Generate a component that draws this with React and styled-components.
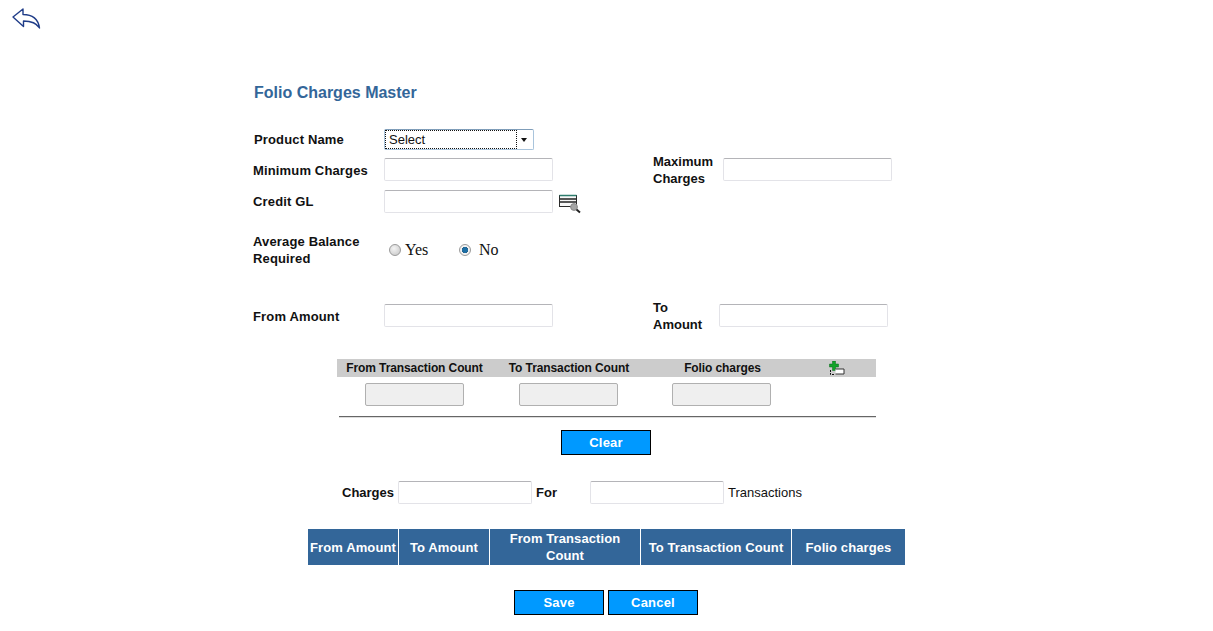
import styled, { createGlobalStyle } from 'styled-components'

const columns = [
  { title: 'From Amount', width: 90 },
  { title: 'To Amount', width: 90 },
  { title: 'From Transaction Count', width: 150 },
  { title: 'To Transaction Count', width: 150 },
  { title: 'Folio charges', width: 113 },
]

function BackIcon() {
  return (
    <svg width="30" height="24" viewBox="0 0 30 24" fill="none">
      <path
        d="M1 9L11 1V6.5C19 6.5 26 10 27.5 20C24.5 15 19 13 11.5 13V18.5L1 9Z"
        stroke="#1f3c88"
        strokeWidth="1.4"
        strokeLinejoin="round"
      />
    </svg>
  )
}

function LookupIcon() {
  return (
    <svg width="23" height="20" viewBox="0 0 23 20">
      <rect x="0.5" y="1.5" width="17" height="11" fill="#f8f8f8" stroke="#2b2b2b" />
      <path d="M0.5 1.5H17.5" stroke="#2e7d6e" strokeWidth="1.5" />
      <path d="M1 5H17M1 8H17" stroke="#222" strokeWidth="1.3" />
      <circle cx="15" cy="13" r="3.4" fill="#a6a6a6" stroke="#8a8a8a" />
      <path d="M17.5 15.5L21 18.5" stroke="#222" strokeWidth="2" />
    </svg>
  )
}

function AddRowIcon() {
  return (
    <svg width="16" height="14" viewBox="0 0 16 14">
      <path d="M3.5 0H6.5V3H9.5V6H6.5V9.5H3.5V6H0.5V3H3.5Z" fill="#12a32a" stroke="#0b6b1c" strokeWidth="0.5" />
      <path d="M6.5 8H15V13H6.5" fill="#fff" stroke="#333" strokeWidth="1" />
      <path d="M1.5 9V13.5H5" stroke="#111" strokeWidth="1" fill="none" strokeDasharray="2 1" />
    </svg>
  )
}

export default function App() {
  return (
    <Page>
      <GlobalStyle />
      <BackLink>
        <BackIcon />
      </BackLink>
      <Form>
        <Title>Folio Charges Master</Title>

        <ProductRow>
          <ProductLabel>Product Name</ProductLabel>
          <SelectBox>
            <SelectValue>Select</SelectValue>
            <SelectArrow />
          </SelectBox>
        </ProductRow>

        <MinRow>
          <LoweredLabel>Minimum Charges</LoweredLabel>
          <TextInput />
          <SideLabel $width={70}>Maximum Charges</SideLabel>
          <TextInput />
        </MinRow>

        <GlRow>
          <Label>Credit GL</Label>
          <TextInput />
          <LookupButton>
            <LookupIcon />
          </LookupButton>
        </GlRow>

        <BalanceRow>
          <Label>Average Balance Required</Label>
          <RadioGroup>
            <RadioOption $gap={4}>
              <Radio />
              Yes
            </RadioOption>
            <RadioOption $gap={8}>
              <Radio $checked />
              No
            </RadioOption>
          </RadioGroup>
        </BalanceRow>

        <AmountRow>
          <LoweredLabel>From Amount</LoweredLabel>
          <TextInput />
          <SideLabel $width={66}>To Amount</SideLabel>
          <TextInput />
        </AmountRow>

        <SlabTable>
          <SlabHead>
            <span>From Transaction Count</span>
            <span>To Transaction Count</span>
            <span>Folio charges</span>
            <AddCell>
              <AddRowIcon />
            </AddCell>
          </SlabHead>
          <SlabRow>
            <SlabInput />
            <SlabInput />
            <SlabInput />
          </SlabRow>
          <SlabRule />
        </SlabTable>

        <ClearRow>
          <ActionButton>Clear</ActionButton>
        </ClearRow>

        <ChargesRow>
          <ChargeLabel>Charges</ChargeLabel>
          <ChargeInput />
          <ForLabel>For</ForLabel>
          <ChargeInput />
          <Transactions>Transactions</Transactions>
        </ChargesRow>

        <Summary>
          {columns.map((col) => (
            <SummaryCell key={col.title} $width={col.width}>
              {col.title}
            </SummaryCell>
          ))}
        </Summary>

        <Actions>
          <ActionButton>Save</ActionButton>
          <ActionButton>Cancel</ActionButton>
        </Actions>
      </Form>
    </Page>
  )
}

const GlobalStyle = createGlobalStyle`
  html, body {
    margin: 0;
    padding: 0;
    background: #fff;
  }
`

const Page = styled.div`
  width: 1213px;
  height: 631px;
  overflow: hidden;
  font-family: 'Liberation Sans', Arial, sans-serif;
  color: #111;
`

const BackLink = styled.div`
  height: 24px;
  padding: 8px 0 0 12px;
`

const Form = styled.div`
  margin-left: 253px;
  padding-top: 52px;
`

const Title = styled.h1`
  margin: 0 0 0 1px;
  height: 18px;
  line-height: 18px;
  font-size: 16px;
  font-weight: bold;
  color: #336699;
`

const Row = styled.div`
  display: flex;
  align-items: center;
`

const ProductRow = styled(Row)`
  margin-top: 27px;
  height: 21px;
`

const MinRow = styled(Row)`
  margin-top: 8px;
  height: 23px;
`

const GlRow = styled(Row)`
  margin-top: 9px;
  height: 23px;
`

const BalanceRow = styled(Row)`
  margin-top: 20px;
  height: 34px;
`

const AmountRow = styled(Row)`
  margin-top: 37px;
  height: 23px;
`

const Label = styled.label`
  flex: 0 0 131px;
  width: 131px;
  padding-right: 8px;
  box-sizing: border-box;
  font-size: 13px;
  font-weight: bold;
  line-height: 17px;
  letter-spacing: 0.15px;
`

const ProductLabel = styled(Label)`
  padding-left: 1px;
`

const LoweredLabel = styled(Label)`
  padding-top: 2px;
`

const SideLabel = styled.label`
  flex: 0 0 ${({ $width }) => $width}px;
  width: ${({ $width }) => $width}px;
  margin-left: 100px;
  padding-right: 4px;
  box-sizing: border-box;
  font-size: 13px;
  font-weight: bold;
  line-height: 17px;
`

const TextInput = styled.input`
  flex: 0 0 169px;
  width: 169px;
  height: 23px;
  box-sizing: border-box;
  padding: 1px 4px;
  background: #fff;
  border: 1px solid #e3e3e8;
  border-top-color: #b4b4b8;
  border-radius: 2px;
  outline: none;
`

const SelectBox = styled.div`
  display: flex;
  width: 150px;
  height: 21px;
  box-sizing: border-box;
  border: 1px solid #a9c4dc;
  border-top-color: #7f9db9;
  border-radius: 2px;
  background: #fff;
`

const SelectValue = styled.div`
  flex: 1;
  border: 1px dotted #111;
  padding-left: 3px;
  font-size: 13px;
  line-height: 18px;
`

const SelectArrow = styled.div`
  flex: 0 0 16px;
  position: relative;

  &::after {
    content: '';
    position: absolute;
    left: 4px;
    top: 8px;
    border-left: 3.5px solid transparent;
    border-right: 3.5px solid transparent;
    border-top: 4px solid #111;
  }
`

const LookupButton = styled.span`
  display: inline-flex;
  margin: 5px 0 0 6px;
`

const RadioGroup = styled.div`
  display: flex;
  padding-left: 5px;
  font-family: 'Liberation Serif', 'Times New Roman', serif;
  font-size: 16px;
`

const RadioOption = styled.span`
  display: flex;
  align-items: center;
  width: 70px;
  gap: ${({ $gap }) => $gap}px;
`

const Radio = styled.span`
  display: inline-block;
  width: 12px;
  height: 12px;
  box-sizing: border-box;
  border-radius: 50%;
  border: 1px solid #9a9a9a;
  background: ${({ $checked }) =>
    $checked
      ? 'radial-gradient(circle, #1d6fa5 0 2.5px, #2a5f86 3px, #f2f2f2 3.5px)'
      : 'radial-gradient(circle at 40% 35%, #f4f4f4, #c4c4c4)'};
`

const SlabTable = styled.div`
  width: 539px;
  margin: 32px 0 0 84px;
`

const SlabHead = styled.div`
  display: grid;
  grid-template-columns: 155px 154px 153px 1fr;
  height: 18px;
  align-items: center;
  background: #cccccc;
  font-size: 12px;
  font-weight: bold;
  text-align: center;
  letter-spacing: -0.1px;
`

const AddCell = styled.span`
  display: flex;
  justify-content: flex-start;
  padding-left: 30px;
  height: 14px;
`

const SlabRow = styled.div`
  display: flex;
  gap: 55px;
  padding: 6px 0 0 28px;
`

const SlabInput = styled.input`
  width: 99px;
  height: 23px;
  box-sizing: border-box;
  background: #efefef;
  border: 1px solid #b0b0b0;
  border-radius: 2px;
  outline: none;

  &:last-child {
    margin-left: -1px;
  }
`

const SlabRule = styled.div`
  margin: 10px 0 0 2px;
  height: 2px;
  border-top: 1px solid #666;
  border-bottom: 1px solid #ddd;
  box-sizing: border-box;
`

const ClearRow = styled.div`
  margin: 12px 0 0 308px;
`

const ActionButton = styled.button`
  width: 90px;
  height: 25px;
  padding: 0;
  background: #0099ff;
  border: 1px solid #000;
  color: #fff;
  font-family: inherit;
  font-size: 13px;
  font-weight: bold;
  letter-spacing: 0.2px;
`

const ChargesRow = styled(Row)`
  margin: 26px 0 0 89px;
  height: 23px;
  font-size: 13px;
`

const ChargeLabel = styled.label`
  width: 56px;
  font-size: 13px;
  font-weight: bold;
`

const ForLabel = styled.label`
  width: 58px;
  padding-left: 4px;
  box-sizing: border-box;
  font-size: 13px;
  font-weight: bold;
`

const ChargeInput = styled(TextInput)`
  flex: 0 0 134px;
  width: 134px;
`

const Transactions = styled.span`
  margin-left: 4px;
`

const Summary = styled.div`
  display: flex;
  gap: 1px;
  margin: 25px 0 0 55px;
  width: 597px;
  height: 36px;
`

const SummaryCell = styled.div`
  flex: 0 0 ${({ $width }) => $width}px;
  display: flex;
  align-items: center;
  justify-content: center;
  text-align: center;
  background: #336699;
  color: #fff;
  font-size: 13px;
  font-weight: bold;
  line-height: 17px;
  letter-spacing: 0.1px;
  padding: 0 1px;
  box-sizing: border-box;
  white-space: ${({ $width }) => ($width === 150 ? 'normal' : 'nowrap')};
`

const Actions = styled.div`
  display: flex;
  gap: 4px;
  margin: 25px 0 0 261px;
`
